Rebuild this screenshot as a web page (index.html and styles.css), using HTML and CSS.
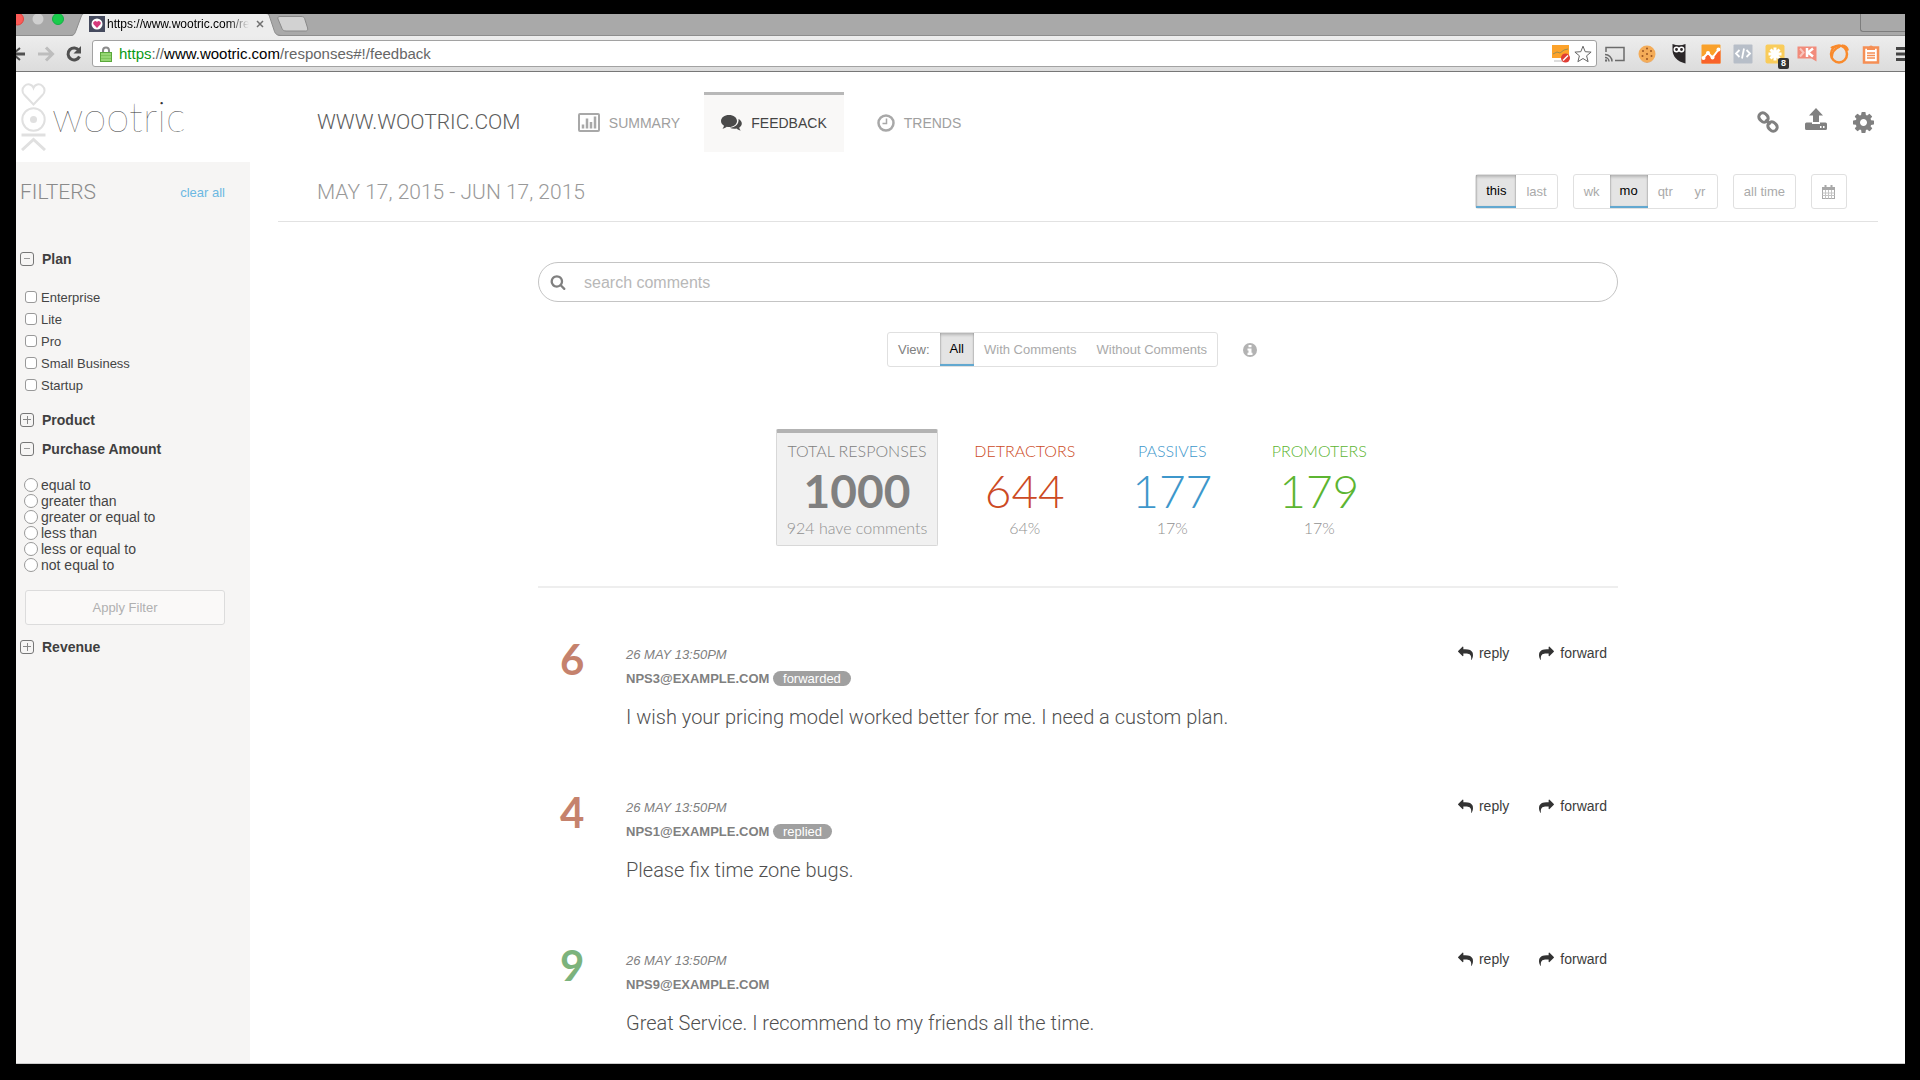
FILE: index.html
```html
<!DOCTYPE html>
<html lang="en">
<head>
    <meta charset="UTF-8">
    <meta name="viewport" content="width=device-width, initial-scale=1.0">
    <title>Wootric - Feedback</title>
    <link rel="stylesheet" href="styles.css">
</head>
<body>
    <!-- shared icons -->
    <svg class="sprite" aria-hidden="true">
        <symbol id="i-reply" viewBox="0 0 1792 1792"><path d="M1792 1120q0 166-127 451-3 7-10.5 24t-13.5 30-13 22q-12 17-28 17-15 0-23.5-10t-8.5-25q0-9 2.5-26.5t2.5-23.5q5-68 5-123 0-101-17.5-181t-48.5-138.5-80-101-105.5-69.5-133-42.5-154-21.5-175.5-6h-224v256q0 26-19 45t-45 19-45-19l-512-512q-19-19-19-45t19-45l512-512q19-19 45-19t45 19 19 45v256h224q713 0 875 403 53 134 53 333z"/></symbol>
        <symbol id="i-search" viewBox="0 0 1792 1792"><path d="M1216 832q0-185-131.5-316.5t-316.5-131.5-316.5 131.5-131.5 316.5 131.5 316.5 316.5 131.5 316.5-131.5 131.5-316.5zm512 832q0 52-38 90t-90 38q-54 0-90-38l-343-342q-179 124-399 124-143 0-273.5-55.5t-225-150-150-225-55.5-273.5 55.5-273.5 150-225 225-150 273.5-55.5 273.5 55.5 225 150 150 225 55.5 273.5q0 220-124 399l343 343q37 37 37 90z"/></symbol>
        <symbol id="i-cog" viewBox="128 128 1536 1536"><path d="M1152 896q0-106-75-181t-181-75-181 75-75 181 75 181 181 75 181-75 75-181zm512-109v222q0 12-8 23t-20 13l-185 28q-19 54-39 91 35 50 107 138 10 12 10 25t-9 23q-27 37-99 108t-94 71q-12 0-26-9l-138-108q-44 23-91 38-16 136-29 186-7 28-36 28h-222q-14 0-24.5-8.5t-11.5-21.5l-28-184q-49-16-90-37l-141 107q-10 9-25 9-14 0-25-11-126-114-165-168-7-10-7-23 0-12 8-23 15-21 51-66.5t54-70.5q-27-50-41-99l-183-27q-13-2-21-12.5t-8-23.5v-222q0-12 8-23t19-13l186-28q14-46 39-92-40-57-107-138-10-12-10-24 0-10 9-23 26-36 98.5-107.5t94.5-71.5q13 0 26 10l138 107q44-23 91-38 16-136 29-186 7-28 36-28h222q14 0 24.5 8.5t11.5 21.5l28 184q49 16 90 37l142-107q9-9 24-9 13 0 25 10 129 119 165 170 7 8 7 22 0 12-8 23-15 21-51 66.5t-54 70.5q26 50 41 98l183 28q13 2 21 12.5t8 23.5z"/></symbol>
    </svg>

    <div class="window">
        <div class="tabstrip">
            <svg class="lights" width="54" height="22" viewBox="0 0 54 22">
                <circle cx="1.5" cy="5" r="6" fill="#fc5b57" stroke="#e0443e"/>
                <circle cx="22" cy="5" r="5.5" fill="#cfcfcf"/>
                <circle cx="42" cy="5" r="5.5" fill="#19cc4b" stroke="#14ae46"/>
            </svg>
            <div class="tab">
                <svg class="tab-shape" viewBox="0 0 212 22" preserveAspectRatio="none"><path d="M0 22c4 0 5-2 6-5L11 3c1-2 1-3 4-3h181c2 0 3 1 4 4l4 12c1 4 3 6 8 6z" fill="#ededed"/><path d="M0 21.5c4 0 5-2 6-5L11 3c1-2 1-3 2-3M198 0c1 0 1 1 2 4l4 12c1 4 3 5.5 8 5.5" fill="none" stroke="#8d8d8d"/></svg>
                <svg class="favicon" width="16" height="16" viewBox="0 0 16 16"><rect width="16" height="16" fill="#454a5e"/><circle cx="8" cy="8" r="5.5" fill="#fff"/><path d="M8 12 4.500 8.300a2 2 0 0 1 3.500-2.300 2 2 0 0 1 3.500 2.300z" fill="#d63a7c"/></svg>
                <span class="tab-title">https://www.wootric.com/re</span>
                <svg class="tab-close" width="8" height="8" viewBox="0 0 8 8"><path d="M1 1l6 6M7 1 1 7" stroke="#707070" stroke-width="1.5"/></svg>
            </div>
            <svg class="new-tab" width="32" height="16" viewBox="0 0 32 16"><path d="M3 .5h21c2 0 3 .5 3.600 2l3 9.500c.4 2-.3 3-2 3H9c-2 0-3.500-1-4-2.500L1 3C.5 1.500 1 .5 3 .5z" fill="#d2d2d2" stroke="#8a8a8a"/></svg>
            <div class="profile"></div>
        </div>

        <div class="toolbar">
            <svg class="nav-arrows" width="68" height="24" viewBox="0 0 68 24">
                <path d="M-5 12H9" stroke="#505050" stroke-width="3"/><path d="M4 6l-7 6 7 6" fill="none" stroke="#505050" stroke-width="2"/>
                <path d="M22 12h13M30 5.500l6.500 6.500-6.500 6.500" fill="none" stroke="#bdbdbd" stroke-width="3"/>
                <path d="M63 8.500A6 6 0 1 0 63.500 14.500" fill="none" stroke="#505050" stroke-width="3"/><path d="M65 4v7.500h-7.500z" fill="#505050"/>
            </svg>
            <div class="omnibox">
                <svg width="12" height="16" viewBox="0 0 12 16"><path d="M3 8V4.500a3 3 0 0 1 6 0V8" fill="none" stroke="#8b8b8b" stroke-width="2"/><rect x=".5" y="6.500" width="11" height="9" fill="#96d674" stroke="#5aa83b"/><path d="M1 9.500h10M1 12.500h10" stroke="#7fc45b"/></svg>
                <div class="url"><span class="scheme">https</span>://<span class="host">www.wootric.com</span>/responses#!/feedback</div>
                <svg width="18" height="18" viewBox="0 0 18 18"><rect width="17" height="13" fill="#fda32b"/><path d="M1 9l4-2 3 1 4-3 4-1" fill="none" stroke="#9b8d4f"/><path d="M2 16h8" stroke="#bbb"/><circle cx="13.5" cy="13" r="4.5" fill="#df3d35"/><path d="M11 15.500l5-5" stroke="#fff" stroke-width="1.5"/></svg>
                <svg width="18" height="18" viewBox="0 0 18 18"><path d="M9 1.200l2.200 5.500 5.900.4-4.500 3.700 1.500 5.900L9 13.500l-5.100 3.200 1.500-5.900L.9 7.100l5.900-.4z" fill="#fff" stroke="#666"/></svg>
            </div>
            <div class="extensions">
                <svg viewBox="0 0 20 20"><path d="M1 8V3.500h18v13h-9" fill="none" stroke="#6b6b6b" stroke-width="1.5"/><path d="M0 10.500a7 7 0 0 1 7 7M0 13.500a4 4 0 0 1 4 4" fill="none" stroke="#6b6b6b" stroke-width="1.5"/><circle cx="1" cy="16.5" r="1.2" fill="#6b6b6b"/></svg>
                <svg viewBox="0 0 20 20"><circle cx="10" cy="10" r="8.5" fill="#f4ac58"/><path d="M3 15a8.500 8.500 0 0 0 14 0 9 9 0 0 1-14 0" fill="#d9822f"/><g fill="#9a5423"><circle cx="6" cy="7" r="1"/><circle cx="10" cy="4.500" r="1"/><circle cx="14" cy="7" r="1"/><circle cx="10" cy="10" r="1"/><circle cx="5.500" cy="12" r="1"/><circle cx="14.500" cy="12" r="1"/><circle cx="10" cy="15" r="1"/></g></svg>
                <svg viewBox="0 0 20 20"><path d="M3.500 0q6.500 2.500 13 0v19.500C8 17.500 3.500 12 3.500 6z" fill="#2b2729"/><circle cx="7.500" cy="5.500" r="2.200" fill="none" stroke="#fff" stroke-width="1.5"/><circle cx="12.500" cy="5.500" r="2.200" fill="none" stroke="#fff" stroke-width="1.5"/><path d="M10 8l-1-2h2z" fill="#fff"/></svg>
                <svg viewBox="0 0 20 20"><rect x=".5" y=".5" width="19" height="19" rx="1" fill="#f9a12b"/><path d="M.5 14 7 8l5 5 7.500-8v14.500H.5z" fill="#f9622b"/><path d="M2 14l5-5 4.500 4.500L18 5" fill="none" stroke="#fff" stroke-width="2"/><g fill="#fff"><circle cx="2.500" cy="14" r="2"/><circle cx="7" cy="9" r="2"/><circle cx="11.500" cy="13.500" r="2"/><circle cx="17.500" cy="5.500" r="2"/></g></svg>
                <svg viewBox="0 0 20 20"><rect x=".5" y=".5" width="19" height="19" rx="1" fill="#b7bec8"/><path d="M6.500 6 3 9.500 6.500 13M13.500 6l3.500 3.500-3.500 3.500M11 4.500l-2 10" fill="none" stroke="#fff" stroke-width="1.8"/></svg>
                <div class="ext-badged">
                    <svg viewBox="0 0 20 20"><rect x=".5" y=".5" width="19" height="19" rx="2" fill="#f9cc5a"/><path d="M10 3.500v13M3.500 10h13M5.500 5.500l9 9M14.500 5.500l-9 9" stroke="#fff" stroke-width="3"/></svg>
                    <span class="ext-count">8</span>
                </div>
                <svg viewBox="0 0 20 20"><path d="M.5 2.500h19v15l-5-3H.5z" fill="#f18b7b"/><path d="M3 4.500 6.500 8.500 3 12.500" fill="none" stroke="#f9c5bc" stroke-width="2"/><path d="M10 4v9M16 4.500 11 8.500l5 4" fill="none" stroke="#fff" stroke-width="2.5"/></svg>
                <svg viewBox="0 0 20 20"><ellipse cx="10" cy="10" rx="8" ry="8.500" fill="none" stroke="#f98a2c" stroke-width="2.5"/><path d="M2 4q2-2 5-1.500M13 1.500q5 0 6 5-2-4-6-5" fill="none" stroke="#f98a2c" stroke-width="2"/><path d="M3 13q0-7 8-10.500" fill="none" stroke="#f98a2c" stroke-width="2"/></svg>
                <svg viewBox="0 0 20 20"><rect x="3" y="3.500" width="14" height="15" fill="#fff" stroke="#f58f55" stroke-width="2.5"/><path d="M6 6V3.500h2a2 2 0 0 1 4 0h2V6z" fill="#f58f55"/><path d="M6 9h8M6 11.500h8M6 14h8" stroke="#f58f55" stroke-width="1.5"/></svg>
            </div>
            <svg class="menu-icon" width="9" height="16" viewBox="0 0 9 16"><path d="M0 2.500h9M0 8h9M0 13.500h9" stroke="#444" stroke-width="3"/></svg>
        </div>

        <header class="header">
            <a class="logo" href="#">
                <svg width="25" height="68" viewBox="0 0 25 68" fill="none" stroke="#e0e0e0" stroke-width="2"><path d="M12.500 21.500 3.500 12a6 6 0 0 1 0-9c3-2.700 7.500-2 9 2 1.500-4 6-4.700 9-2a6 6 0 0 1 0 9z"/><circle cx="12.500" cy="36.500" r="11.200"/><circle cx="12.500" cy="36.500" r="3.500" fill="#e0e0e0" stroke="none"/><path d="M.5 52h24" stroke-width="3"/><path d="M1 67l11.500-10.500L24 67" stroke-width="3"/></svg>
                <span class="logo-text">wootric</span>
            </a>
            <h1 class="site-name">WWW.WOOTRIC.COM</h1>
            <nav class="nav">
                <a class="nav-item" href="#">
                    <svg width="22" height="19" viewBox="0 0 22 19"><rect x="1" y="1" width="20" height="17" rx="1" fill="none" stroke="#a8a8a8" stroke-width="2"/><path d="M5 15.500v-4M9 15.500v-10M13 15.500V9M17 15.500v-12" stroke="#a8a8a8" stroke-width="2.5"/></svg>
                    SUMMARY
                </a>
                <a class="nav-item active" href="#">
                    <svg width="21" height="18" viewBox="0 0 21 18" fill="#4a4a4a"><path d="M8 1c4.500 0 8 2.600 8 6s-3.500 6-8 6c-.8 0-1.500 0-2.200-.2C4.500 13.800 3 14.500 1.500 14.700c.8-.8 1.300-1.700 1.500-2.900C1.200 10.700 0 9 0 7c0-3.400 3.500-6 8-6z"/><path d="M17.500 5c2 1 3.300 2.500 3.300 4.500 0 1.700-1 3.200-2.600 4.200.2 1.200.8 2.100 1.500 2.800-1.600-.2-3-.8-4.200-1.900-2.500.5-5 .1-6.800-.9C14 13.600 18.300 10 17.500 5z"/></svg>
                    FEEDBACK
                </a>
                <a class="nav-item" href="#">
                    <svg width="18" height="18" viewBox="0 0 18 18"><circle cx="9" cy="9" r="7.500" fill="none" stroke="#a8a8a8" stroke-width="2.5"/><path d="M9.500 4.500v5h-4" fill="none" stroke="#a8a8a8" stroke-width="1.5"/></svg>
                    TRENDS
                </a>
            </nav>
            <div class="tools">
                <button class="tool" aria-label="Integrations"><svg width="22" height="22" viewBox="0 0 22 22" fill="none" stroke="#808080" stroke-width="3"><rect x="1.500" y="2.500" width="10" height="8" rx="4" transform="rotate(45 6.500 6.500)"/><rect x="10.500" y="11.500" width="10" height="8" rx="4" transform="rotate(45 15.500 15.500)"/><path d="M8.500 8.500l5 5" stroke-width="2.5"/></svg></button>
                <button class="tool upload" aria-label="Export"><svg width="22" height="22" viewBox="0 0 22 22" fill="#808080"><path d="M11 0l7 7.500h-4V14H8V7.500H4z"/><path d="M1.500 14.500H7V16h8v-1.500h5.500A1.500 1.500 0 0 1 22 16v4.500a1.500 1.500 0 0 1-1.500 1.500h-19A1.500 1.500 0 0 1 0 20.500V16a1.500 1.500 0 0 1 1.500-1.500zM15 18v2h1.500v-2zm3 0v2h1.500v-2z" fill-rule="evenodd"/></svg></button>
                <button class="tool" aria-label="Settings"><svg width="21" height="21" fill="#808080"><use href="#i-cog"/></svg></button>
            </div>
        </header>

        <div class="layout">
            <aside class="sidebar">
                <div class="filters-title">
                    <h2>FILTERS</h2>
                    <a href="#">clear all</a>
                </div>

                <button class="filter-head"><span class="toggle open"></span>Plan</button>
                <div class="checks">
                    <label><input type="checkbox">Enterprise</label>
                    <label><input type="checkbox">Lite</label>
                    <label><input type="checkbox">Pro</label>
                    <label><input type="checkbox">Small Business</label>
                    <label><input type="checkbox">Startup</label>
                </div>

                <button class="filter-head"><span class="toggle"></span>Product</button>

                <button class="filter-head"><span class="toggle open"></span>Purchase Amount</button>
                <div class="radios">
                    <label><input type="radio" name="amount">equal to</label>
                    <label><input type="radio" name="amount">greater than</label>
                    <label><input type="radio" name="amount">greater or equal to</label>
                    <label><input type="radio" name="amount">less than</label>
                    <label><input type="radio" name="amount">less or equal to</label>
                    <label><input type="radio" name="amount">not equal to</label>
                </div>
                <button class="apply">Apply Filter</button>

                <button class="filter-head"><span class="toggle"></span>Revenue</button>
            </aside>

            <main class="main">
                <div class="range">
                    <h2>MAY 17, 2015 - JUN 17, 2015</h2>
                    <div class="btn-group">
                        <button class="btn active">this</button>
                        <button class="btn">last</button>
                    </div>
                    <div class="btn-group">
                        <button class="btn">wk</button>
                        <button class="btn active">mo</button>
                        <button class="btn">qtr</button>
                        <button class="btn">yr</button>
                    </div>
                    <div class="btn-group">
                        <button class="btn">all time</button>
                    </div>
                    <div class="btn-group">
                        <button class="btn" aria-label="Pick dates"><svg width="13" height="14" viewBox="0 0 13 14" fill="none" stroke="#a8a8a8"><rect x=".5" y="2.500" width="12" height="11"/><path d="M.5 8h12M.5 10.500h12M3.500 5v8.500M6.500 5v8.500M9.500 5v8.500" stroke="#c4c4c4"/><path d="M1 4h11" stroke-width="2"/><path d="M3.500 0v4M9.500 0v4" stroke-width="2"/></svg></button>
                    </div>
                </div>

                <div class="content">
                    <div class="search">
                        <svg width="16" height="16" fill="#808080"><use href="#i-search"/></svg>
                        <input type="text" placeholder="search comments" aria-label="search comments">
                    </div>

                    <div class="view">
                        <div class="btn-group">
                            <span class="view-label">View:</span>
                            <button class="btn active">All</button>
                            <button class="btn">With Comments</button>
                            <button class="btn">Without Comments</button>
                        </div>
                        <svg width="14" height="14" viewBox="0 0 14 14"><circle cx="7" cy="7" r="7" fill="#b3b3b3"/><path d="M5.500 2h3v2.200h-3zM4.500 5.500h4v4.300h1V12h-5V9.800h1V7.500h-1z" fill="#fff"/></svg>
                    </div>

                    <div class="stats">
                        <div class="stat active">
                            <div class="stat-label">TOTAL RESPONSES</div>
                            <div class="stat-value">1000</div>
                            <div class="stat-note">924 have comments</div>
                        </div>
                        <div class="stat detractors">
                            <div class="stat-label">DETRACTORS</div>
                            <div class="stat-value">644</div>
                            <div class="stat-note">64%</div>
                        </div>
                        <div class="stat passives">
                            <div class="stat-label">PASSIVES</div>
                            <div class="stat-value">177</div>
                            <div class="stat-note">17%</div>
                        </div>
                        <div class="stat promoters">
                            <div class="stat-label">PROMOTERS</div>
                            <div class="stat-value">179</div>
                            <div class="stat-note">17%</div>
                        </div>
                    </div>

                    <div class="response">
                        <div class="score low">6</div>
                        <div class="response-body">
                            <div class="date">26 MAY 13:50PM</div>
                            <div class="email">NPS3@EXAMPLE.COM <span class="badge">forwarded</span></div>
                            <p class="comment">I wish your pricing model worked better for me. I need a custom plan.</p>
                        </div>
                        <div class="actions">
                            <a href="#"><svg width="15" height="15"><use href="#i-reply"/></svg>reply</a>
                            <a href="#"><svg class="flip" width="15" height="15"><use href="#i-reply"/></svg>forward</a>
                        </div>
                    </div>

                    <div class="response">
                        <div class="score low">4</div>
                        <div class="response-body">
                            <div class="date">26 MAY 13:50PM</div>
                            <div class="email">NPS1@EXAMPLE.COM <span class="badge">replied</span></div>
                            <p class="comment">Please fix time zone bugs.</p>
                        </div>
                        <div class="actions">
                            <a href="#"><svg width="15" height="15"><use href="#i-reply"/></svg>reply</a>
                            <a href="#"><svg class="flip" width="15" height="15"><use href="#i-reply"/></svg>forward</a>
                        </div>
                    </div>

                    <div class="response">
                        <div class="score high">9</div>
                        <div class="response-body">
                            <div class="date">26 MAY 13:50PM</div>
                            <div class="email">NPS9@EXAMPLE.COM</div>
                            <p class="comment">Great Service. I recommend to my friends all the time.</p>
                        </div>
                        <div class="actions">
                            <a href="#"><svg width="15" height="15"><use href="#i-reply"/></svg>reply</a>
                            <a href="#"><svg class="flip" width="15" height="15"><use href="#i-reply"/></svg>forward</a>
                        </div>
                    </div>
                </div>
            </main>
        </div>
    </div>
</body>
</html>
```

FILE: styles.css
```css
* {
    box-sizing: border-box;
}
body {
    margin: 0;
    padding: 14px 15px 16px 16px;
    height: 100vh;
    background: #000;
    font-family: "Liberation Sans", Arial, sans-serif;
    font-size: 13px;
    color: #444;
}
h1, h2, p {
    margin: 0;
    font-weight: 300;
}
a {
    color: inherit;
    text-decoration: none;
}
button {
    font: inherit;
    color: inherit;
    background: none;
    border: none;
    padding: 0;
    cursor: pointer;
}
svg {
    display: block;
    flex: none;
}
.sprite {
    position: absolute;
    width: 0;
    height: 0;
}
.window {
    display: flex;
    flex-direction: column;
    height: 100%;
    background: #fff;
    border-bottom: 1px solid #ccc;
    overflow: hidden;
}

/* browser chrome */
.tabstrip {
    display: flex;
    flex: none;
    height: 22px;
    background: #a9a9a9;
    border-bottom: 1px solid #8d8d8d;
}
.tab {
    position: relative;
    display: flex;
    align-items: center;
    width: 212px;
    height: 22px;
    padding: 0 18px 2px 19px;
    gap: 2px;
}
.tab-shape {
    position: absolute;
    left: 0;
    top: 0;
    width: 100%;
    height: 22px;
}
.favicon, .tab-title, .tab-close {
    position: relative;
}
.tab-title {
    flex: 1;
    overflow: hidden;
    white-space: nowrap;
    font-size: 12px;
    line-height: 16px;
    color: #000;
    -webkit-mask-image: linear-gradient(to right, #000 85%, transparent);
    mask-image: linear-gradient(to right, #000 85%, transparent);
}
.tab-close {
    margin-left: 5px;
}
.new-tab {
    margin-top: 2px;
    margin-left: -5px;
}
.profile {
    width: 45px;
    height: 18px;
    margin-left: auto;
    border: 1px solid #7d7d7d;
    border-width: 0 0 1px 1px;
    border-bottom-left-radius: 3px;
}
.toolbar {
    display: flex;
    flex: none;
    align-items: center;
    height: 36px;
    background: linear-gradient(#ededed, #dcdcdc);
    border-bottom: 1px solid #777;
}
.omnibox {
    display: flex;
    flex: 1;
    align-items: center;
    height: 27px;
    margin-left: 8px;
    padding: 0 4px 0 7px;
    background: #fff;
    border: 1px solid #a2a2a2;
    border-radius: 3px;
}
.url {
    flex: 1;
    padding-left: 7px;
    font-size: 15px;
    color: #666;
}
.scheme {
    color: #0a9a16;
}
.host {
    color: #000;
}
.omnibox svg:last-child {
    margin-left: 4px;
}
.extensions {
    display: flex;
    gap: 12px;
    margin-left: 8px;
}
.extensions svg {
    width: 20px;
    height: 20px;
}
.ext-badged {
    position: relative;
}
.ext-count {
    position: absolute;
    right: -4px;
    bottom: -5px;
    width: 11px;
    background: #333;
    border-radius: 2px;
    color: #fff;
    font-size: 9px;
    font-weight: bold;
    line-height: 11px;
    text-align: center;
}
.menu-icon {
    margin-left: 15px;
}

/* header */
.header {
    display: flex;
    flex: none;
    align-items: center;
    height: 90px;
    padding: 0 31px 0 5px;
}
.logo {
    display: flex;
    align-items: center;
    gap: 6px;
    width: 296px;
}
.logo-text {
    padding-bottom: 2px;
    font-family: Lato, sans-serif;
    font-size: 42px;
    font-weight: 100;
    line-height: 50px;
    color: #333;
}
.site-name {
    width: 242px;
    font-family: Roboto, sans-serif;
    font-size: 21px;
    white-space: nowrap;
    padding-top: 10px;
    color: #5c5c5c;
}
.nav {
    display: flex;
    gap: 5px;
    padding-top: 10px;
}
.nav-item {
    display: flex;
    align-items: center;
    justify-content: center;
    gap: 9px;
    width: 140px;
    height: 60px;
    padding-bottom: 2px;
    border-top: 3px solid transparent;
    font-size: 14px;
    color: #a0a0a0;
}
.nav-item.active {
    background: #f9f8f7;
    border-color: #b8b8b8;
    color: #444;
}
.tools {
    display: flex;
    gap: 26px;
    margin-left: auto;
    padding-top: 10px;
}
.upload {
    margin-top: -6px;
}

/* filters */
.layout {
    display: flex;
    flex: 1;
    min-height: 0;
}
.sidebar {
    width: 234px;
    flex: none;
    padding: 0 25px 0 4px;
    background: #f6f5f4;
}
.filters-title {
    display: flex;
    align-items: center;
    justify-content: space-between;
    height: 60px;
    margin-bottom: 22px;
}
.filters-title h2 {
    font-family: Roboto, sans-serif;
    font-size: 21px;
    color: #8a8a8a;
}
.filters-title a {
    color: #6cb8e2;
}
.filter-head {
    display: flex;
    align-items: center;
    gap: 8px;
    width: 100%;
    height: 29px;
    font-size: 14px;
    font-weight: bold;
    color: #3f3f3f;
}
.toggle {
    width: 14px;
    height: 14px;
    border: 1px solid #777;
    border-radius: 3px;
    background:
        linear-gradient(#888, #888) center / 8px 1px no-repeat,
        linear-gradient(#888, #888) center / 1px 8px no-repeat;
}
.toggle.open {
    background: linear-gradient(#999, #999) center / 6px 1px no-repeat;
}
.checks {
    padding: 13px 0 9px 5px;
}
.checks label, .radios label {
    display: flex;
    align-items: center;
}
.checks label {
    height: 22px;
    gap: 4px;
}
.checks input, .radios input {
    appearance: none;
    width: 12px;
    height: 12px;
    margin: 0;
    background: #fff;
    border: 1px solid #999;
    border-radius: 3px;
}
.radios {
    padding: 14px 0 17px 4px;
    font-size: 14px;
}
.radios label {
    height: 16px;
    gap: 3px;
}
.radios input {
    width: 14px;
    height: 14px;
    border-radius: 50%;
}
.apply {
    display: block;
    width: calc(100% - 5px);
    height: 35px;
    margin: 0 0 7px 5px;
    background: #faf9f8;
    border: 1px solid #dcdcdc;
    border-radius: 3px;
    color: #b0b0b0;
}

/* main column */
.main {
    flex: 1;
    padding: 0 27px 0 28px;
}
.range {
    display: flex;
    align-items: center;
    gap: 15px;
    height: 60px;
    padding: 0 31px 0 39px;
    border-bottom: 1px solid #e2e2e2;
}
.range h2 {
    flex: 1;
    font-family: Roboto, sans-serif;
    font-size: 21px;
    color: #999;
}
.btn-group {
    display: flex;
    align-items: center;
    height: 35px;
    border: 1px solid #e0e0e0;
    border-radius: 3px;
}
.btn {
    min-width: 34px;
    height: 33px;
    padding: 0 10px;
    color: #aaa;
}
.btn.active {
    background: #e4e4e4;
    box-shadow: inset 0 2px 3px rgba(0,0,0,0.2), inset 1px 0 1px rgba(0,0,0,0.1), inset -1px 0 1px rgba(0,0,0,0.1);
    border-bottom: 2px solid #62a8d0;
    color: #000;
}
.content {
    max-width: 1080px;
    margin: 0 auto;
    padding-top: 40px;
}
.search {
    display: flex;
    align-items: center;
    height: 40px;
    padding: 0 12px 0 11px;
    border: 1px solid #c4c4c4;
    border-radius: 20px;
}
.search input {
    flex: 1;
    margin-left: 18px;
    padding: 1px 0 0;
    border: none;
    outline: none;
    background: none;
    font: 16px "Liberation Sans", Arial, sans-serif;
}
.search input::placeholder {
    color: #b8b8b8;
}
.view {
    display: flex;
    align-items: center;
    justify-content: center;
    gap: 25px;
    margin-top: 30px;
    padding-right: 12px;
}
.view-label {
    padding: 0 10px;
    color: #808080;
}
.stats {
    display: flex;
    justify-content: center;
    gap: 25px;
    padding: 62px 0 40px;
    border-bottom: 2px solid #eee;
    font-family: Lato, sans-serif;
    font-weight: 300;
    text-align: center;
}
.stat {
    min-width: 122px;
    height: 117px;
    padding: 8px 10px;
    border: 1px solid transparent;
    border-top-width: 4px;
}
.stat.active {
    background: #f1f1f1;
    border-color: #d8d8d8;
    border-top-color: #b3b3b3;
    border-radius: 2px;
    color: #808080;
}
.stat-label, .stat-note {
    font-size: 16px;
    line-height: 20px;
}
.stat-note {
    color: #909090;
}
.stat-value {
    padding-top: 3px;
    font-size: 46px;
    line-height: 54px;
}
.stat.active .stat-value {
    font-weight: 700;
}
.detractors {
    color: #cc4a24;
}
.passives {
    color: #3d97cb;
}
.promoters {
    color: #5cb531;
}

/* responses */
.response {
    display: flex;
    height: 153px;
    padding: 55px 11px 0 22px;
}
.score {
    width: 66px;
    font-family: Lato, sans-serif;
    font-size: 42px;
    font-weight: 700;
    line-height: 32px;
}
.score.low {
    color: #c5826d;
}
.score.high {
    color: #7cb37c;
}
.response-body {
    flex: 1;
    line-height: 24px;
    color: #808080;
}
.date {
    font-style: italic;
}
.email {
    font-weight: bold;
}
.badge {
    display: inline-block;
    padding: 0 10px;
    background: #a0a0a0;
    border-radius: 8px;
    color: #fff;
    font-weight: normal;
    line-height: 15px;
}
.comment {
    margin-top: 14px;
    font-family: Roboto, sans-serif;
    font-size: 20px;
    color: #505050;
}
.actions {
    display: flex;
    gap: 30px;
    font-size: 14px;
    color: #3c3c3c;
}
.actions a {
    display: flex;
    align-items: center;
    gap: 6px;
    height: 20px;
}
.actions svg {
    fill: #333;
}
.flip {
    transform: scaleX(-1);
}
```
